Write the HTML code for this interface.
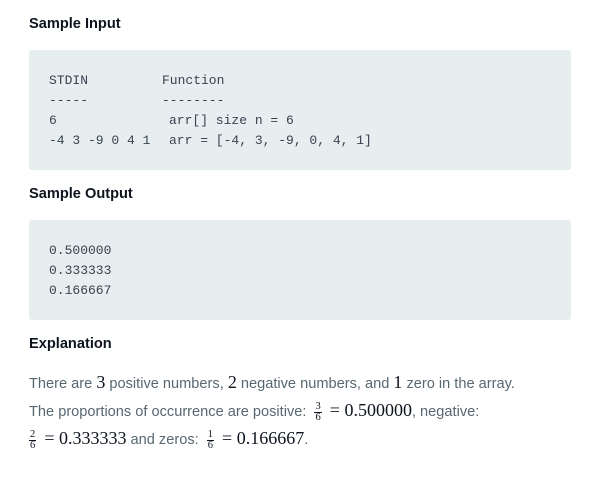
<!DOCTYPE html>
<html><head><meta charset="utf-8"><style>
*{margin:0;padding:0;box-sizing:border-box}
body{width:601px;height:499px;background:#fff;position:relative;font-family:"Liberation Sans",sans-serif;overflow:hidden}
.h{position:absolute;left:29px;font-weight:bold;font-size:14.6px;color:#0e141e}
.box{position:absolute;left:29px;width:542px;background:#e7eef0;border-radius:3px}
.m{position:absolute;font-family:"Liberation Mono",monospace;font-size:13px;color:#39424e;white-space:pre;line-height:20px}
.t{position:absolute;left:29px;font-size:14.6px;color:#576871;white-space:nowrap;line-height:20px}
.n{font-family:"Liberation Serif",serif;font-size:18px;color:#0e141e}
.f{display:inline-block;vertical-align:middle;text-align:center;font-family:"Liberation Serif",serif;font-size:10.5px;color:#0e141e;line-height:10px;margin:0 4px}
.f span{display:block}
.f span:first-child{border-bottom:1px solid #0e141e;padding:0 1px}
</style></head><body>
<div class="h" style="top:16px">Sample Input</div>
<div class="box" style="top:50px;height:120px"></div>
<div class="m" style="top:71px;left:49px">STDIN
-----
6
-4 3 -9 0 4 1</div>
<div class="m" style="top:71px;left:162px">Function
--------</div>
<div class="m" style="top:111px;left:169px">arr[] size n = 6
arr = [-4, 3, -9, 0, 4, 1]</div>
<div class="h" style="top:186px">Sample Output</div>
<div class="box" style="top:220px;height:100px"></div>
<div class="m" style="top:241px;left:49px">0.500000
0.333333
0.166667</div>
<div class="h" style="top:336px">Explanation</div>
<div class="t" style="top:372px">There are <span class="n">3</span> positive numbers, <span class="n">2</span> negative numbers, and <span class="n">1</span> zero in the array.</div>
<div class="t" style="top:400px">The proportions of occurrence are positive: <span class="f"><span>3</span><span>6</span></span> <span class="n">= 0.500000</span>, negative:</div>
<div class="t" style="top:428px"><span class="f" style="margin-left:0"><span>2</span><span>6</span></span> <span class="n">= 0.333333</span> and zeros: <span class="f"><span>1</span><span>6</span></span> <span class="n">= 0.166667</span>.</div>
</body></html>
